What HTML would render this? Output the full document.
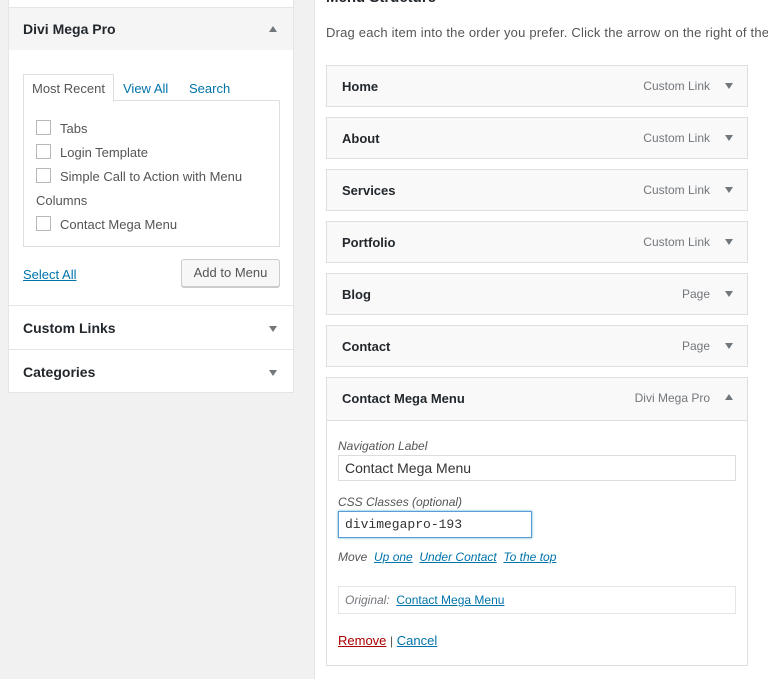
<!DOCTYPE html>
<html><head><style>
body{margin:0;width:768px;height:679px;background:#f1f1f1;font-family:"Liberation Sans",sans-serif;position:relative;overflow:hidden;color:#23282d}
.a{position:absolute}
.lp{left:8px;top:0;width:286px;height:393px;background:#fff;border:1px solid #e5e5e5;border-top:none;box-sizing:border-box}
.sec{position:absolute;left:0;width:284px;border-top:1px solid #e5e5e5;font-weight:bold;font-size:14px;padding-left:14px;box-sizing:border-box}
.tri{position:absolute;right:16px;width:0;height:0;border-left:4px solid transparent;border-right:4px solid transparent}
.dn{border-top:6px solid #72777c}.up{border-bottom:6px solid #72777c}
.rp{left:314px;top:0;width:454px;height:679px;background:#fff;border-left:1px solid #e5e5e5}
.it{position:absolute;left:11px;width:422px;height:42px;background:#f9f9f9;border:1px solid #dfdfdf;box-sizing:border-box;font-size:13px}
.it b{position:absolute;left:15px;top:13px}
.it span{position:absolute;right:37px;top:13px;color:#72777c;font-size:12px}
.it .tri{right:14px;top:17px}
.cb{position:absolute;left:12px;width:15px;height:15px;border:1px solid #b4b9be;box-sizing:border-box;background:#fff}
.lk{color:#0073aa;text-decoration:underline}
i{font-style:italic}
</style></head><body>
<div class="a lp">
 <div class="sec" style="top:7px;height:43px;background:#f5f5f5;line-height:42px;font-size:14px">Divi Mega Pro<div class="tri up" style="top:18px"></div></div>
 <div class="a" style="left:14px;top:74px;width:91px;height:28px;border:1px solid #dfdfdf;border-bottom:none;background:#fff;z-index:2;font-size:13px;color:#555;line-height:28px;padding-left:8px;box-sizing:border-box;white-space:nowrap">Most Recent</div>
 <div class="a" style="left:114px;top:81px;font-size:13px;color:#0073aa">View All</div>
 <div class="a" style="left:180px;top:81px;font-size:13px;color:#0073aa">Search</div>
 <div class="a" style="left:14px;top:100px;width:257px;height:147px;border:1px solid #dfdfdf;box-sizing:border-box;font-size:13px;color:#555">
  <div class="cb" style="top:19px"></div><div class="a" style="left:36px;top:20px">Tabs</div>
  <div class="cb" style="top:43px"></div><div class="a" style="left:36px;top:44px">Login Template</div>
  <div class="cb" style="top:67px"></div><div class="a" style="left:36px;top:68px">Simple Call to Action with Menu</div>
  <div class="a" style="left:12px;top:92px">Columns</div>
  <div class="cb" style="top:115px"></div><div class="a" style="left:36px;top:116px">Contact Mega Menu</div>
 </div>
 <div class="a lk" style="left:14px;top:267px;font-size:13px">Select All</div>
 <div class="a" style="left:172px;top:259px;width:99px;height:28px;border:1px solid #ccc;border-radius:3px;background:#f7f7f7;box-sizing:border-box;font-size:13px;color:#555;text-align:center;line-height:26px;box-shadow:0 1px 0 #ccc">Add to Menu</div>
 <div class="sec" style="top:305px;height:44px;line-height:44px">Custom Links<div class="tri dn" style="top:20px"></div></div>
 <div class="sec" style="top:349px;height:44px;line-height:44px">Categories<div class="tri dn" style="top:20px"></div></div>
</div>
<div class="a rp">
 <div class="a" style="left:11px;top:-11px;font-size:15px;font-weight:bold">Menu Structure</div>
 <div class="a" style="left:11px;top:25px;font-size:13px;color:#555;white-space:nowrap;letter-spacing:0.2px">Drag each item into the order you prefer. Click the arrow on the right of the</div>
 <div class="it" style="top:65px"><b>Home</b><span>Custom Link</span><div class="tri dn"></div></div>
 <div class="it" style="top:117px"><b>About</b><span>Custom Link</span><div class="tri dn"></div></div>
 <div class="it" style="top:169px"><b>Services</b><span>Custom Link</span><div class="tri dn"></div></div>
 <div class="it" style="top:221px"><b>Portfolio</b><span>Custom Link</span><div class="tri dn"></div></div>
 <div class="it" style="top:273px"><b>Blog</b><span>Page</span><div class="tri dn"></div></div>
 <div class="it" style="top:325px"><b>Contact</b><span>Page</span><div class="tri dn"></div></div>
 <div class="it" style="top:377px;height:289px;background:#fff">
  <div class="a" style="left:0;top:0;width:420px;height:42px;background:#f9f9f9;border-bottom:1px solid #dfdfdf"></div>
  <b>Contact Mega Menu</b><span>Divi Mega Pro</span><div class="tri up" style="top:16px"></div>
  <div class="a" style="left:11px;top:61px;font-size:12px;color:#555"><i>Navigation Label</i></div>
  <div class="a" style="left:11px;top:77px;width:398px;height:26px;border:1px solid #ddd;box-sizing:border-box;font-size:14px;padding:4px 6px;color:#333">Contact Mega Menu</div>
  <div class="a" style="left:11px;top:117px;font-size:12px;color:#555"><i>CSS Classes (optional)</i></div>
  <div class="a" style="left:11px;top:133px;width:194px;height:27px;border:1px solid #5b9dd9;box-shadow:0 0 2px rgba(30,140,190,.8);box-sizing:border-box;font-family:'Liberation Mono',monospace;font-size:13px;padding:5px 6px;color:#333">divimegapro-193</div>
  <div class="a" style="left:11px;top:172px;font-size:12px;color:#555;white-space:nowrap"><i>Move&nbsp; <span class="lk" style="position:static;color:#0073aa;font-size:12px">Up one</span>&nbsp; <span class="lk" style="position:static;color:#0073aa;font-size:12px">Under Contact</span>&nbsp; <span class="lk" style="position:static;color:#0073aa;font-size:12px">To the top</span></i></div>
  <div class="a" style="left:11px;top:208px;width:398px;height:28px;border:1px solid #e5e5e5;box-sizing:border-box;font-size:12px;padding:6px 6px;color:#72777c;white-space:nowrap"><i>Original:</i>&nbsp; <u style="color:#0073aa">Contact Mega Menu</u></div>
  <div class="a" style="left:11px;top:255px;font-size:13px;white-space:nowrap"><u style="color:#a00">Remove</u> <span style="position:static;color:#555">|</span> <u style="color:#0073aa">Cancel</u></div>
 </div>
</div>
</body></html>
